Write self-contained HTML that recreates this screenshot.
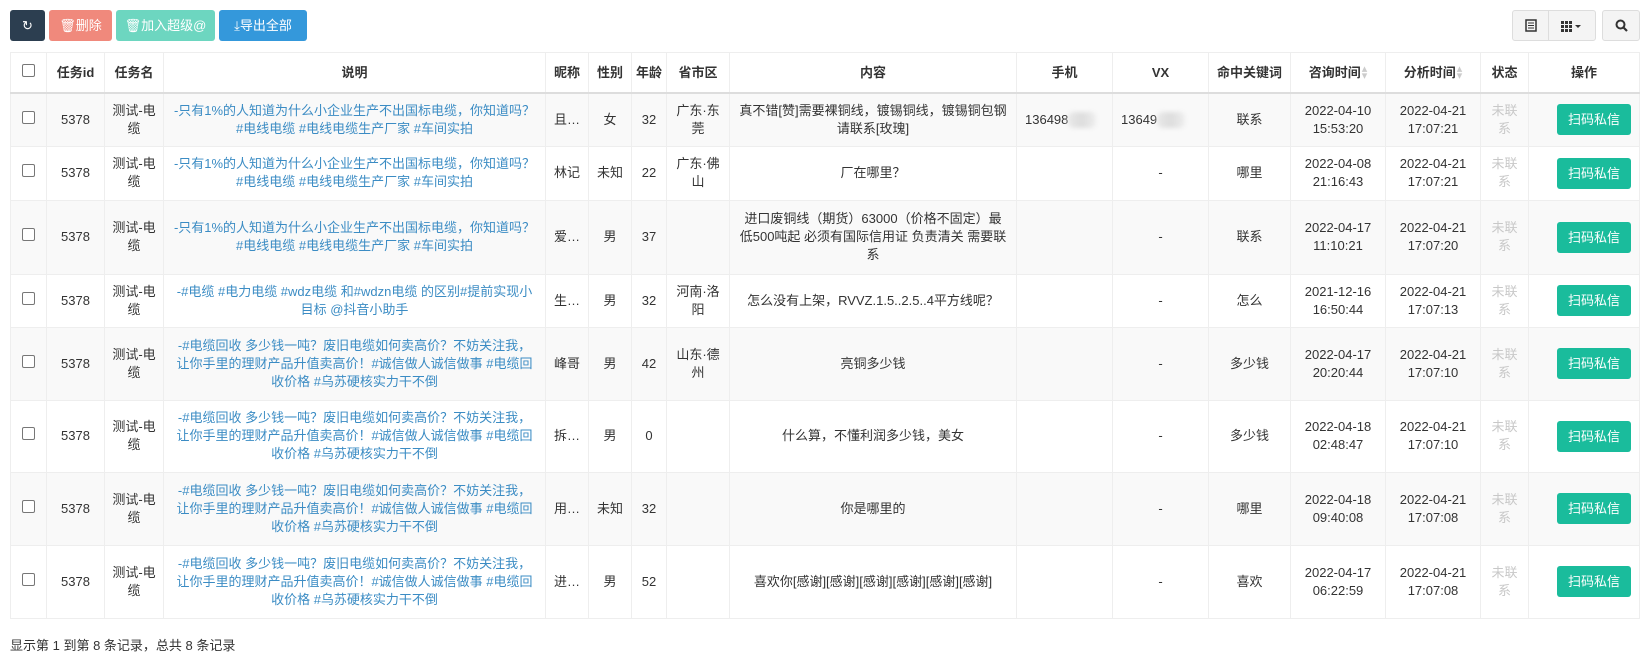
<!DOCTYPE html>
<html><head><meta charset="utf-8">
<style>
body{margin:0;background:#fff;font-family:"Liberation Sans","Noto Sans CJK SC",sans-serif;font-size:13px;color:#333;width:1650px;height:671px;overflow:hidden;position:relative}
.btn{position:absolute;top:10px;height:31px;border-radius:3px;color:#fff;font-size:13px;line-height:31px;text-align:center;box-sizing:border-box}
.tb{position:absolute;top:10px;height:31px;background:#f4f4f4;border:1px solid #ddd;box-sizing:border-box;display:flex;align-items:center;justify-content:center}
table{position:absolute;left:10px;top:52px;border-collapse:collapse;table-layout:fixed;width:1629px}
td,th{border:1px solid #eee;text-align:center;vertical-align:middle;padding:0 8px;line-height:18px;overflow:hidden;word-break:normal;overflow-wrap:break-word}
th{height:39px;font-weight:bold;border-bottom:2px solid #ddd;white-space:nowrap;padding:0 4px}
tbody tr:nth-child(odd){background:#f9f9f9}
tbody td:nth-child(3){padding:0 4px;word-break:break-all}
.a{color:#3b8cc4}
.g{color:#c8c8c8}
.op{display:inline-block;background:#1abc9c;color:#fff;width:74px;height:31px;line-height:31px;border-radius:3px;margin-left:20px;text-align:center}
.cb{display:inline-block;width:11px;height:11px;border:1px solid #777;border-radius:2px;background:#fff}
.nw{white-space:nowrap;text-overflow:ellipsis;padding:0 5px}
.blur{display:inline-block;width:28px;height:16px;background:linear-gradient(90deg,#e8e8e8,#ddd,#eee);border-radius:6px;vertical-align:middle;filter:blur(2px)}
.s{color:#ccc;font-size:11px;margin-left:1px;display:inline-block;line-height:7px;vertical-align:middle;font-weight:normal}
</style></head><body>
<div class="btn" style="left:10px;width:35px;background:#2c3e50">&#8635;</div>
<div class="btn" style="left:49px;width:63px;background:#f0897c">🗑删除</div>
<div class="btn" style="left:116px;width:99px;background:#6dd6c0">🗑加入超级@</div>
<div class="btn" style="left:219px;width:88px;background:#3498db">⤓导出全部</div>
<div class="tb" style="left:1512px;width:37px;border-radius:3px 0 0 3px"><svg width="12" height="13"><rect x="1" y="1" width="10" height="11" fill="none" stroke="#333" stroke-width="1.5"/><path d="M3 4h6M3 6.5h6M3 9h6" stroke="#333"/></svg></div>
<div class="tb" style="left:1548px;width:48px;border-radius:0 3px 3px 0"><svg width="22" height="12"><g fill="#333"><rect x="0" y="1" width="3" height="3"/><rect x="4" y="1" width="3" height="3"/><rect x="8" y="1" width="3" height="3"/><rect x="0" y="5" width="3" height="3"/><rect x="4" y="5" width="3" height="3"/><rect x="8" y="5" width="3" height="3"/><rect x="0" y="9" width="3" height="3"/><rect x="4" y="9" width="3" height="3"/><rect x="8" y="9" width="3" height="3"/><path d="M14 5h6l-3 3z"/></g></svg></div>
<div class="tb" style="left:1602px;width:38px;border-radius:3px"><svg width="13" height="13"><circle cx="5.5" cy="5.5" r="4" fill="none" stroke="#333" stroke-width="2"/><path d="M8.5 8.5l3.5 3.5" stroke="#333" stroke-width="2.2"/></svg></div>
<table>
<colgroup><col style="width:36px"><col style="width:58px"><col style="width:59px"><col style="width:382px"><col style="width:43px"><col style="width:43px"><col style="width:35px"><col style="width:63px"><col style="width:287px"><col style="width:96px"><col style="width:96px"><col style="width:82px"><col style="width:95px"><col style="width:95px"><col style="width:48px"><col style="width:111px"></colgroup>
<thead><tr><th><span class="cb"></span></th><th>任务id</th><th>任务名</th><th>说明</th><th>昵称</th><th>性别</th><th>年龄</th><th>省市区</th><th>内容</th><th>手机</th><th>VX</th><th>命中关键词</th><th>咨询时间<span class="s">▴<br>▾</span></th><th>分析时间<span class="s">▴<br>▾</span></th><th>状态</th><th>操作</th></tr></thead>
<tbody>
<tr style="height:53px"><td><span class="cb"></span></td><td>5378</td><td>测试-电缆</td><td class="a">-只有1%的人知道为什么小企业生产不出国标电缆，你知道吗？#电线电缆 #电线电缆生产厂家 #车间实拍</td><td class="nw">且…</td><td>女</td><td>32</td><td>广东·东莞</td><td>真不错[赞]需要裸铜线，镀锡铜线，镀锡铜包钢请联系[玫瑰]</td><td style="text-align:left">136498<span class="blur"></span></td><td style="text-align:left">13649<span class="blur"></span></td><td>联系</td><td>2022-04-10 15:53:20</td><td>2022-04-21 17:07:21</td><td class="g">未联系</td><td style="text-align:left"><span class="op">扫码私信</span></td></tr>
<tr style="height:54px"><td><span class="cb"></span></td><td>5378</td><td>测试-电缆</td><td class="a">-只有1%的人知道为什么小企业生产不出国标电缆，你知道吗？#电线电缆 #电线电缆生产厂家 #车间实拍</td><td class="nw">林记</td><td>未知</td><td>22</td><td>广东·佛山</td><td>厂在哪里？</td><td></td><td>-</td><td>哪里</td><td>2022-04-08 21:16:43</td><td>2022-04-21 17:07:21</td><td class="g">未联系</td><td style="text-align:left"><span class="op">扫码私信</span></td></tr>
<tr style="height:74px"><td><span class="cb"></span></td><td>5378</td><td>测试-电缆</td><td class="a">-只有1%的人知道为什么小企业生产不出国标电缆，你知道吗？#电线电缆 #电线电缆生产厂家 #车间实拍</td><td class="nw">爱…</td><td>男</td><td>37</td><td></td><td>进口废铜线（期货）63000（价格不固定）最低500吨起 必须有国际信用证 负责清关 需要联系</td><td></td><td>-</td><td>联系</td><td>2022-04-17 11:10:21</td><td>2022-04-21 17:07:20</td><td class="g">未联系</td><td style="text-align:left"><span class="op">扫码私信</span></td></tr>
<tr style="height:53px"><td><span class="cb"></span></td><td>5378</td><td>测试-电缆</td><td class="a">-#电缆 #电力电缆 #wdz电缆 和#wdzn电缆 的区别#提前实现小目标 @抖音小助手</td><td class="nw">生…</td><td>男</td><td>32</td><td>河南·洛阳</td><td>怎么没有上架，RVVZ.1.5..2.5..4平方线呢？</td><td></td><td>-</td><td>怎么</td><td>2021-12-16 16:50:44</td><td>2022-04-21 17:07:13</td><td class="g">未联系</td><td style="text-align:left"><span class="op">扫码私信</span></td></tr>
<tr style="height:73px"><td><span class="cb"></span></td><td>5378</td><td>测试-电缆</td><td class="a">-#电缆回收 多少钱一吨？废旧电缆如何卖高价？不妨关注我，让你手里的理财产品升值卖高价！#诚信做人诚信做事 #电缆回收价格 #乌苏硬核实力干不倒</td><td class="nw">峰哥</td><td>男</td><td>42</td><td>山东·德州</td><td>亮铜多少钱</td><td></td><td>-</td><td>多少钱</td><td>2022-04-17 20:20:44</td><td>2022-04-21 17:07:10</td><td class="g">未联系</td><td style="text-align:left"><span class="op">扫码私信</span></td></tr>
<tr style="height:72px"><td><span class="cb"></span></td><td>5378</td><td>测试-电缆</td><td class="a">-#电缆回收 多少钱一吨？废旧电缆如何卖高价？不妨关注我，让你手里的理财产品升值卖高价！#诚信做人诚信做事 #电缆回收价格 #乌苏硬核实力干不倒</td><td class="nw">拆…</td><td>男</td><td>0</td><td></td><td>什么算，不懂利润多少钱，美女</td><td></td><td>-</td><td>多少钱</td><td>2022-04-18 02:48:47</td><td>2022-04-21 17:07:10</td><td class="g">未联系</td><td style="text-align:left"><span class="op">扫码私信</span></td></tr>
<tr style="height:73px"><td><span class="cb"></span></td><td>5378</td><td>测试-电缆</td><td class="a">-#电缆回收 多少钱一吨？废旧电缆如何卖高价？不妨关注我，让你手里的理财产品升值卖高价！#诚信做人诚信做事 #电缆回收价格 #乌苏硬核实力干不倒</td><td class="nw">用…</td><td>未知</td><td>32</td><td></td><td>你是哪里的</td><td></td><td>-</td><td>哪里</td><td>2022-04-18 09:40:08</td><td>2022-04-21 17:07:08</td><td class="g">未联系</td><td style="text-align:left"><span class="op">扫码私信</span></td></tr>
<tr style="height:73px"><td><span class="cb"></span></td><td>5378</td><td>测试-电缆</td><td class="a">-#电缆回收 多少钱一吨？废旧电缆如何卖高价？不妨关注我，让你手里的理财产品升值卖高价！#诚信做人诚信做事 #电缆回收价格 #乌苏硬核实力干不倒</td><td class="nw">进…</td><td>男</td><td>52</td><td></td><td>喜欢你[感谢][感谢][感谢][感谢][感谢][感谢]</td><td></td><td>-</td><td>喜欢</td><td>2022-04-17 06:22:59</td><td>2022-04-21 17:07:08</td><td class="g">未联系</td><td style="text-align:left"><span class="op">扫码私信</span></td></tr>
</tbody></table>
<div style="position:absolute;left:10px;top:637px;font-size:13px;line-height:18px">显示第 1 到第 8 条记录，总共 8 条记录</div>
</body></html>
